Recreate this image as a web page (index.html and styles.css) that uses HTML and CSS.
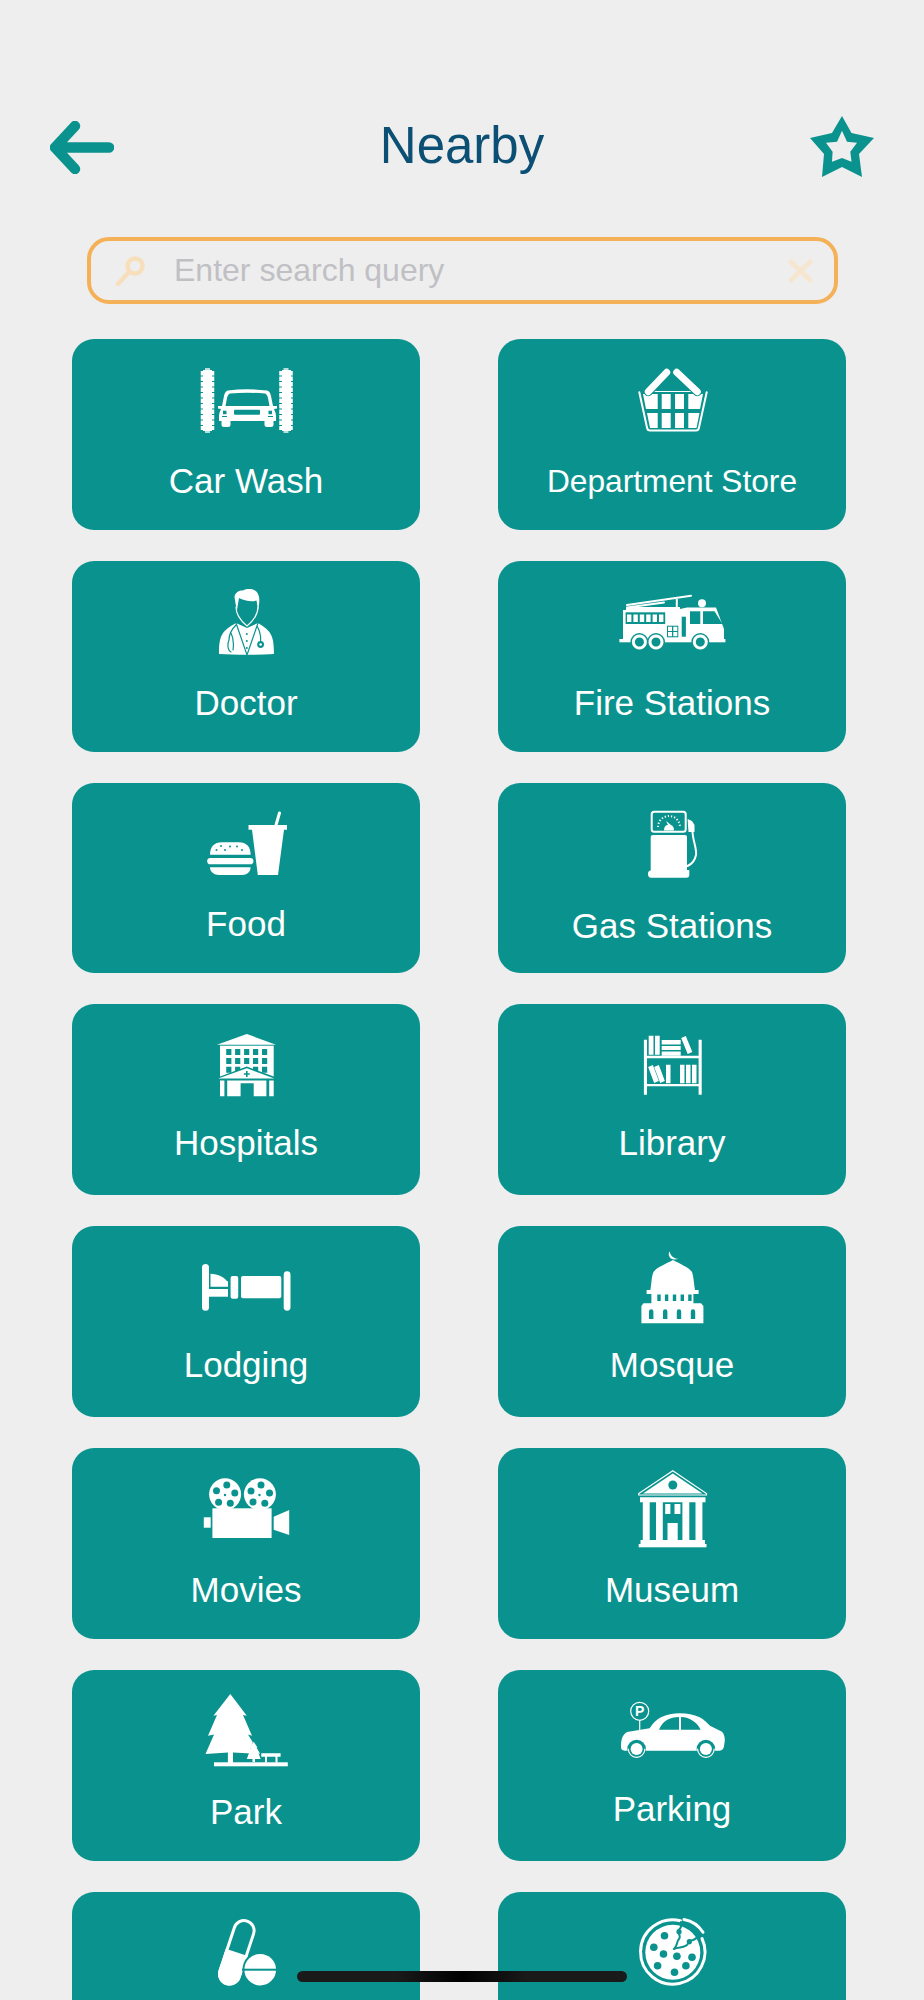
FILE: index.html
```html
<!DOCTYPE html>
<html lang="en">
<head>
    <meta charset="UTF-8">
    <meta name="viewport" content="width=device-width, initial-scale=1.0">
    <title>Nearby</title>
    <link rel="stylesheet" href="styles.css">
</head>
<body>
    <header class="topbar">
        <svg class="back" viewBox="0 0 64 53"><path d="M59 26.5H5M25 5L5 26.5L25 48"/></svg>
        <h1 class="title">Nearby</h1>
        <svg class="star" viewBox="0 0 64 61"><path fill-rule="evenodd" d="M32 0L41.5 17L64 22L49 38L52 61L32 51L12 61L14 38L0 22L22 17ZM32 14.7L27 25.7L16 26.7L22.6 35.7L22 45.7L32 42L41.5 45.7L40.3 35.7L47 26.7L37 25.7Z"/></svg>
    </header>

    <div class="search">
        <svg class="search-icon" viewBox="0 0 31 30"><circle cx="20" cy="10" r="7.5"/><path d="M14 16L3 28"/></svg>
        <span class="placeholder">Enter search query</span>
        <svg class="clear-icon" viewBox="0 0 25 24"><path d="M3 3L22 21M22 3L3 21"/></svg>
    </div>

    <main class="grid">
        <div class="card">
            <svg class="ico" viewBox="0 0 120 76">
                <rect x="17" y="7" width="9" height="61"/><rect x="96" y="7" width="9" height="61"/>
                <path class="bristle" d="M21.5 8V67M100 8V67"/>
                <rect class="cap" x="19" y="5" width="5" height="3"/><rect class="cap" x="19" y="67" width="5" height="3"/>
                <rect class="cap" x="97.5" y="5" width="5" height="3"/><rect class="cap" x="97.5" y="67" width="5" height="3"/>
                <path fill-rule="evenodd" d="M42 27.5Q61 25 81 27.5Q84 28 85 33L87 43L91 43L91 45.5L88 46Q90 50 90 53L90 58L87.5 58L87.5 62Q87.5 64 85 64L81 64Q78.5 64 78.5 62L78.5 58L44.5 58L44.5 62Q44.5 64 42 64L38 64Q35.5 64 35.5 62L35.5 58L33 58L33 53Q33 50 35 46L32 45.5L32 43L36 43L38 33Q39 28 42 27.5ZM44 30.5Q61 29 79 30.5Q81 31 82 35L83.5 43L39.5 43L41 35Q42 31 44 30.5Z"/>
                <g class="hole"><rect x="48" y="46.7" width="26" height="5" rx="1"/><rect x="37" y="47.7" width="3.5" height="3.5"/><rect x="82.5" y="47.7" width="3.5" height="3.5"/><rect x="36" y="53" width="5" height="1"/><rect x="82" y="53" width="5" height="1"/></g>
            </svg>
            <span class="label">Car Wash</span>
        </div>
        <div class="card">
            <svg class="ico" viewBox="0 0 120 76">
                <path class="line w2" d="M27.3 29.3L35 64.5Q35.5 67.5 38 67.5H84Q86.5 67.5 87 64.5L94.7 29.3"/>
                <path class="line w1" d="M42 28.5H80"/>
                <path d="M31 31H45.7V46H34ZM49.7 31H58.7V46H49.7ZM63 31H72V46H63ZM76.3 31H91L88 46H76.3ZM35 50H45.7V65H38ZM49.7 50H58.7V65H49.7ZM63 50H72V65H63ZM76.3 50H87.5L84.5 65H76.3Z"/>
                <path class="line teal w9" d="M54.7 9.3L36.3 28.7M64.7 9.3L85.3 28.7"/>
                <path class="line w7" d="M54.7 9.3L36.3 28.7M64.7 9.3L85.3 28.7"/>
            </svg>
            <span class="label small">Department Store</span>
        </div>
        <div class="card">
            <svg class="ico" viewBox="0 0 120 76">
                <path d="M49 15C47 9 52 5 57 5.5C62 3 70 3.5 72 9C74 13 73.5 18 72 25L70.5 15.5C66 17 58 16 53 13C52.5 17 51.5 21 51 25C50 22 49.5 18 49 15Z"/>
                <path class="line w1" d="M50 22C50 30 55 36 61 41C67 36 72 30 72 22"/>
                <path d="M33 69C33 50 36 46 50 38L61 43L72 38C85 46 88 50 88 69C70 70 50 70 33 69Z"/>
                <path class="line teal w1" d="M50 38L61 70L72 38M50 40C44 46 43 50 43 55C41 60 42 66 45 67M45 48C47 52 48 58 47 65M71 41C74 46 75 50 74.6 56"/>
                <circle class="hole" cx="74.6" cy="59.5" r="3.4"/><circle cx="74.6" cy="59.5" r="1.3"/>
                <g class="hole"><circle cx="60.8" cy="49" r="1"/><circle cx="60.8" cy="56" r="1"/><circle cx="60.8" cy="63" r="1"/></g>
            </svg>
            <span class="label">Doctor</span>
        </div>
        <div class="card">
            <svg class="ico" viewBox="0 0 120 76">
                <path class="line w2" d="M15 20L79 10.7M15 22.5L52 17.5M64.8 13V23"/>
                <rect x="11" y="25" width="58" height="30"/><rect x="14" y="22" width="54" height="4"/>
                <circle cx="90" cy="18.3" r="4"/>
                <path d="M68 24L75 22.5H104L112 44V55H68Z"/>
                <rect x="7.4" y="54" width="106" height="3.3"/>
                <g class="hole">
                    <rect x="13.6" y="27.3" width="39.6" height="11.7"/>
                    <rect x="78" y="26.3" width="10.3" height="12.7"/>
                    <path d="M91 26.3H102.5L110.5 39H91Z"/>
                    <rect x="69.7" y="31.7" width="4.2" height="20"/>
                    <rect x="55" y="40.7" width="11.3" height="11.6"/>
                    <circle cx="27.4" cy="57" r="9"/><circle cx="44" cy="57" r="9"/><circle cx="88.3" cy="57" r="9"/>
                </g>
                <path d="M15 29.5H19.4V37H15ZM21.4 29.5H25.8V37H21.4ZM27.8 29.5H32.2V37H27.8ZM34.2 29.5H38.6V37H34.2ZM40.6 29.5H45V37H40.6ZM47 29.5H51.4V37H47Z"/>
                <path d="M56 41.7H60V46H56ZM61.3 41.7H65.3V46H61.3ZM56 47H60V51.3H56ZM61.3 47H65.3V51.3H61.3Z"/>
                <path fill-rule="evenodd" d="M27.4 49.5a7.5 7.5 0 1 0 .01 0ZM27.4 52.5a4.5 4.5 0 1 1 -.01 0ZM44 49.5a7.5 7.5 0 1 0 .01 0ZM44 52.5a4.5 4.5 0 1 1 -.01 0ZM88.3 49.5a7.5 7.5 0 1 0 .01 0ZM88.3 52.5a4.5 4.5 0 1 1 -.01 0Z"/>
            </svg>
            <span class="label">Fire Stations</span>
        </div>
        <div class="card">
            <svg class="ico" viewBox="0 0 120 76">
                <path d="M24 47.7C24 40 28 35.3 36 35.3H52.6C60.6 35.3 64.6 40 64.6 47.7Z"/>
                <rect x="21.2" y="51" width="46.2" height="6.3" rx="3.1"/>
                <path d="M24 60.3H64.6C64.6 65 61 68 56 68H33C28 68 24 65 24 60.3Z"/>
                <g class="hole"><circle cx="35" cy="39" r="1"/><circle cx="44" cy="39.5" r="1"/><circle cx="51" cy="39.5" r="1"/><circle cx="30.5" cy="43" r="1"/><circle cx="39" cy="43" r="1"/><circle cx="56" cy="43" r="1"/></g>
                <path d="M62.5 18H101V22.7H98L92 68H71.8L66 22.7H62.5Z"/>
                <path class="line w3" d="M93.5 6L90 18"/>
            </svg>
            <span class="label up1">Food</span>
        </div>
        <div class="card">
            <svg class="ico" viewBox="0 0 120 76">
                <rect class="line w2" x="39.7" y="4.7" width="34" height="20" rx="2.5"/>
                <path class="line w2 ticks" d="M46 20A11 11 0 0 1 68 20"/>
                <path d="M52 23.5Q52 18 56 18L54 14L59 18Q62 19 62 23.5Z"/>
                <path d="M41 28H73Q75 28 75 30V63H77.3V68Q77.3 70.7 74.5 70.7H39Q36 70.7 36 67Q36 63.5 38.7 63.5V30Q38.7 28 41 28Z"/>
                <path d="M75.6 12L80 14L82.5 18V25H76.5Z"/>
                <path class="line w2" d="M80.5 25C81 34 85 42 84 48C83 53 80 57 75.6 59"/>
            </svg>
            <span class="label down1">Gas Stations</span>
        </div>
        <div class="card">
            <svg class="ico" viewBox="0 0 120 76">
                <path d="M60.8 6L90 16.7H30.9Z"/>
                <rect x="34" y="17.7" width="53.7" height="32"/>
                <g class="hole">
                    <path d="M40.2 21h5.2v6h-5.2zM49.1 21h5.2v6h-5.2zM58.1 21h5.2v6h-5.2zM67 21h5.2v6h-5.2zM76 21h5.2v6h-5.2zM40.2 30h5.2v6h-5.2zM49.1 30h5.2v6h-5.2zM58.1 30h5.2v6h-5.2zM67 30h5.2v6h-5.2zM76 30h5.2v6h-5.2zM40.2 38.7h5.2v6h-5.2zM49.1 38.7h5.2v6h-5.2zM67 38.7h5.2v6h-5.2zM76 38.7h5.2v6h-5.2z"/>
                    <path d="M60.8 38.5L92 50V53H30V50Z"/>
                </g>
                <path d="M60.8 40.3L88.4 50.5H32.2Z"/>
                <path class="hole" d="M60 43h1.6v2.2h2.2v1.6h-2.2v2.2h-1.6v-2.2h-2.2v-1.6h2.2z"/>
                <path d="M34 52.5H38.4V68.3H34ZM83.2 52.5H87.7V68.3H83.2ZM41.2 52.5H80.4V68.3H67.7V55.3H54.6V68.3H41.2Z"/>
            </svg>
            <span class="label up3">Hospitals</span>
        </div>
        <div class="card">
            <svg class="ico" viewBox="0 0 120 76">
                <path d="M31.9 11.7H35V27.7H86.6V11.7H89.7V66.7H86.6V58.3H35V66.7H31.9ZM35 30.3V56H86.6V30.3Z"/>
                <path d="M36.7 7.7H41.5V26.7H36.7ZM43 7.7H47.7V26.7H43ZM49.7 12H68.7V16.5H49.7ZM49.7 18H68.7V22H49.7ZM49.7 23.5H68.7V27.7H49.7Z"/>
                <path class="line w5" d="M71.5 9L78 25M38.5 38L44.5 54M44.5 38L50.5 54"/>
                <path d="M54 36.7H58.5V55.3H54ZM68 36.7H72.5V55.3H68ZM74 36.7H78.5V55.3H74ZM80 36.7H84.5V55.3H80Z"/>
            </svg>
            <span class="label up3">Library</span>
        </div>
        <div class="card">
            <svg class="ico" viewBox="0 0 120 76">
                <rect x="16" y="14" width="7" height="46.7" rx="3.5"/>
                <rect x="97.7" y="21.3" width="6.8" height="39.4" rx="3.4"/>
                <rect x="23" y="39" width="19" height="7.7"/>
                <path d="M24.5 24.3C32 24.5 39 28 42 33H24.5ZM24.5 31.7H42V37.3H24.5Z" transform="translate(0 -.5)"/>
                <rect x="44.6" y="26" width="7.6" height="22.7" rx="2"/>
                <rect x="55" y="26" width="40.3" height="22.3" rx="2"/>
            </svg>
            <span class="label up3">Lodging</span>
        </div>
        <div class="card">
            <svg class="ico" viewBox="0 0 120 76">
                <path d="M57.5 1.3C55 6 59 11.5 66.5 8.8C62 9 58.5 6 57.5 1.3Z"/>
                <path d="M61 10C68 14 76.5 17 80 22C81.5 26 82 34 83 40H86.6V44H81.4V53.3H89L91.4 56V73.3H29.4V56L31.5 53.3H39.4V44H34.6V40H38.4C39.5 34 39.5 26 41.5 22C45 17 54 14 61 10Z"/>
                <g class="hole">
                    <path d="M45.3 44.5h3.4v6.5h-3.4zM52.9 44.5h3.4v6.5h-3.4zM60.8 44.5h3.4v6.5h-3.4zM68.6 44.5h3.4v6.5h-3.4zM76.2 44.5h3.4v6.5h-3.4z"/>
                    <path d="M37 69V61.5a2.2 2.2 0 0 1 4.4 0V69ZM51 69V61.5a2.2 2.2 0 0 1 4.4 0V69ZM64.8 69V61.5a2.2 2.2 0 0 1 4.4 0V69ZM78.8 69V61.5a2.2 2.2 0 0 1 4.4 0V69Z"/>
                </g>
            </svg>
            <span class="label up3">Mosque</span>
        </div>
        <div class="card">
            <svg class="ico" viewBox="0 0 120 76">
                <circle cx="39.1" cy="22.3" r="16"/><circle cx="73.9" cy="22.3" r="16"/>
                <g class="hole">
                    <circle cx="40.8" cy="13" r="3.5"/><circle cx="30.5" cy="18.7" r="3.5"/><circle cx="48.8" cy="21" r="3.5"/><circle cx="32.6" cy="30.3" r="3.5"/><circle cx="44.3" cy="31.3" r="3.5"/><circle cx="39" cy="23" r="1.2"/>
                    <circle cx="75" cy="13" r="3.5"/><circle cx="65" cy="19" r="3.5"/><circle cx="83.5" cy="21" r="3.5"/><circle cx="67" cy="30" r="3.5"/><circle cx="78.8" cy="31.3" r="3.5"/><circle cx="73.5" cy="23" r="1.2"/>
                </g>
                <rect x="26.4" y="36.3" width="59.2" height="29.7"/>
                <rect x="17.8" y="45.3" width="6.9" height="10.4"/>
                <path d="M87.7 44.7L103.2 38V63L87.7 57.7Z"/>
            </svg>
            <span class="label">Movies</span>
        </div>
        <div class="card">
            <svg class="ico" viewBox="0 0 120 76">
                <path class="line w1" d="M60.8 -1.3L94.5 21.5V23H26.7V21.5Z"/>
                <path d="M60.8 1.5L90.5 21.5H31Z"/>
                <circle class="hole" cx="60.8" cy="13" r="4.5"/>
                <path fill-rule="evenodd" d="M28 25.3H93.5V30.3H90.4V68H93V72H28.5V68H30.8V30.3H28ZM37.7 30.3V68H44V30.3ZM50.8 30.3V68H70.4V30.3ZM77.3 30.3V68H83.5V30.3Z"/>
                <path d="M53.2 32H58.4V42H53.2ZM62.5 32H68.4V42H62.5ZM55.5 51H65.7V72H55.5Z"/>
                <rect x="26.7" y="72" width="67.8" height="3.3"/>
            </svg>
            <span class="label">Museum</span>
        </div>
        <div class="card">
            <svg class="ico" viewBox="0 0 120 76">
                <path d="M44.3 0L60.8 21.7L57 21L66 41.7L62 40.5L74 60L47 58.5V69H41.9V58.5L19.5 60L28 40.5L22 41.7L31 21L27.4 21.7Z"/>
                <path class="hole" d="M67.7 46L75.5 67H60Z"/>
                <path d="M67.7 47.7L71.5 53.5L70.5 53.5L73.5 59L72.5 59L74.6 65H69V68H66.5V65H60.8L63 59L62 59L65 53.5L64 53.5Z"/>
                <rect x="28" y="68.3" width="73.8" height="4"/>
                <path d="M75.3 59.3H94.6V62.7H91.5V68.5H89.5V62.7H81V68.5H79V62.7H75.3Z"/>
            </svg>
            <span class="label">Park</span>
        </div>
        <div class="card">
            <svg class="ico" viewBox="0 0 120 76">
                <circle class="line w1" cx="27.7" cy="17.3" r="9"/>
                <text class="pin" x="27.7" y="22.2">P</text>
                <path class="line w1" d="M27.7 26.3V37"/>
                <path fill-rule="evenodd" d="M9 53C9 46 10 41 15 38L37.7 34.3C41 29 45 25 49 23.3C60 18 76 18 87.6 23.3C92 25.5 95 29 98 31.7L110 37.7C112 40 113 43 112.8 47L111.8 53.3C111 56 109 56.7 107 56.7H14C11 56.7 9 56 9 53ZM47 35.7H67V23C58 23 50.5 27 47 35.7ZM69 35.7H88.7C85 28 78 23.5 69 23Z"/>
                <g class="hole"><circle cx="24.6" cy="55" r="9.3"/><circle cx="93.9" cy="55" r="9.3"/></g>
                <circle cx="24.6" cy="55" r="6"/><circle cx="93.9" cy="55" r="6"/>
                <path class="line w1" d="M16.3 55a8.3 8.3 0 0 0 16.6 0M85.6 55a8.3 8.3 0 0 0 16.6 0"/>
            </svg>
            <span class="label up3">Parking</span>
        </div>
        <div class="card">
            <svg class="ico" viewBox="0 0 120 76">
                <g transform="rotate(18.4 50.8 36.3)">
                    <rect class="line w3" x="40.7" y="3.4" width="20.2" height="65.8" rx="10.1"/>
                    <path d="M39.2 36.3H62.4V59.1A11.6 11.6 0 0 1 39.2 59.1Z"/>
                </g>
                <circle class="hole" cx="74.2" cy="53.7" r="17.8"/>
                <circle cx="74.2" cy="53.7" r="15.8"/>
                <rect class="hole" x="56" y="52.7" width="36" height="2"/>
            </svg>
        </div>
        <div class="card">
            <svg class="ico" viewBox="0 0 120 76">
                <path class="line w3" d="M68.5 4.7A32.2 32.2 0 1 0 90 22.5"/>
                <circle cx="60.8" cy="36.3" r="27.5"/>
                <g class="hole">
                    <circle cx="52.5" cy="19.7" r="3.8"/><circle cx="41.8" cy="31.3" r="3.8"/><circle cx="51.5" cy="38" r="3.8"/><circle cx="45.6" cy="49.7" r="3.8"/><circle cx="62.5" cy="56.3" r="3.8"/><circle cx="73.9" cy="49.7" r="3.8"/><circle cx="64.9" cy="40.3" r="3.8"/><circle cx="80" cy="41.3" r="3.8"/>
                    <circle cx="67" cy="15.7" r="2.6"/><circle cx="77.3" cy="25.7" r="2.6"/>
                </g>
                <path class="line teal w2" d="M61.8 33C66 30 64 26 67 23C70 20 64 16 67.5 13C70 11 69 9 69 6M61.8 33C67 31 70 32 74 29.7C77 28 76 25 79 24.5C82 24 84 23 88 19"/>
                <path class="line w3" d="M72 3.5C80 5 87 10 91 16.3"/>
            </svg>
        </div>
    </main>

    <div class="home-bar"></div>
</body>
</html>
```

FILE: styles.css
```css
html, body {
    margin: 0;
    height: 2000px;
    overflow: hidden;
}
body {
    position: relative;
    background-color: #eeeeee;
    font-family: "Liberation Sans", Arial, sans-serif;
}
.topbar {
    display: flex;
    justify-content: space-between;
    align-items: flex-start;
    padding: 116px 50px 0;
    height: 61px;
}
.back {
    width: 64px;
    height: 53px;
    margin-top: 5px;
    fill: none;
    stroke: #0a938e;
    stroke-width: 10.5;
    stroke-linecap: round;
    stroke-linejoin: round;
}
.title {
    margin: 0;
    font-size: 51px;
    font-weight: normal;
    line-height: 59px;
    color: #0b4f74;
}
.star {
    width: 64px;
    height: 61px;
    fill: #0a938e;
}
.search {
    display: flex;
    align-items: center;
    box-sizing: border-box;
    width: 751px;
    height: 67px;
    margin: 60px 0 0 87px;
    padding: 0 21px 0 24px;
    border: 4px solid #f5b158;
    border-radius: 22px;
}
.search-icon {
    width: 31px;
    height: 30px;
    fill: none;
    stroke: #f7dfbc;
    stroke-width: 4.5;
    stroke-linecap: round;
}
.placeholder {
    flex: 1;
    margin-left: 28px;
    font-size: 32px;
    color: #c0c0c4;
}
.clear-icon {
    width: 25px;
    height: 24px;
    fill: none;
    stroke: #f6e6d0;
    stroke-width: 5;
    stroke-linecap: round;
}
.grid {
    display: grid;
    grid-template-columns: 348px 348px;
    column-gap: 78px;
    row-gap: 31px;
    margin-top: 35px;
    padding-left: 72px;
}
.card {
    display: flex;
    flex-direction: column;
    align-items: center;
    height: 190.8px;
    padding-top: 24px;
    box-sizing: border-box;
    border-radius: 22px;
    background-color: #0a938e;
}
.ico {
    width: 120px;
    height: 76px;
    overflow: visible;
    fill: #ffffff;
}
.ico .hole {
    fill: #0a938e;
}
.ico .line {
    fill: none;
    stroke: #ffffff;
    stroke-linecap: round;
}
.ico .teal {
    stroke: #0a938e;
}
.ico .w1 { stroke-width: 1.2; }
.ico .w2 { stroke-width: 2; }
.ico .w3 { stroke-width: 3; }
.ico .w5 { stroke-width: 5; stroke-linecap: butt; }
.ico .w7 { stroke-width: 7; }
.ico .w9 { stroke-width: 9; }
.ico .ticks {
    stroke-dasharray: 1.2 2;
    stroke-linecap: butt;
}
.ico .bristle {
    fill: none;
    stroke: #ffffff;
    stroke-width: 13.5;
    stroke-dasharray: 4.6 0.9;
}
.ico .cap {
    opacity: 0.7;
}
.ico .pin {
    font-size: 14px;
    font-weight: bold;
    text-anchor: middle;
}
.label {
    margin-top: 22px;
    font-size: 35px;
    line-height: 40px;
    color: #ffffff;
}
.label.small {
    font-size: 31.7px;
}
.label.up1 {
    margin-top: 21px;
}
.label.up3 {
    margin-top: 19px;
}
.label.down1 {
    margin-top: 23px;
}
.home-bar {
    position: absolute;
    left: 297px;
    top: 1971px;
    width: 330px;
    height: 11px;
    border-radius: 6px;
    background: linear-gradient(90deg, #1a1a1a 30%, #000000 50%, #1a1a1a 70%);
}
```
